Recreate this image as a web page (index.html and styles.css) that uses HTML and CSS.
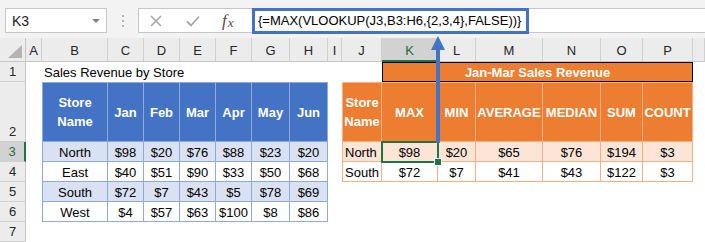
FILE: index.html
```html
<!DOCTYPE html>
<html>
<head>
<meta charset="utf-8">
<link rel="stylesheet" href="styles.css">
</head>
<body>
<div class="app">
  <div class="toolbar">
    <div class="namebox"><span>K3</span><span class="dd"></span></div>
    <div class="grip"><i></i><i></i><i></i></div>
    <div class="fbar">
      <div class="ficons">
        <svg class="ico-x" width="12" height="12" viewBox="0 0 12 12"><path d="M1 1L11 11M11 1L1 11" stroke="#a8a8a8" stroke-width="1.6" fill="none"/></svg>
        <svg class="ico-ok" width="14" height="12" viewBox="0 0 14 12"><path d="M1 6.5L5 10.5L13 1.5" stroke="#a8a8a8" stroke-width="1.8" fill="none"/></svg>
        <span class="fx">f<span class="fxx">x</span></span>
      </div>
      <div class="finput">{=MAX(VLOOKUP(J3,B3:H6,{2,3,4},FALSE))}</div>
    </div>
  </div>

  <div class="sheet">
    <div class="corner"><span class="tri"></span></div>
    <div class="ch">A</div>
    <div class="ch">B</div>
    <div class="ch">C</div>
    <div class="ch">D</div>
    <div class="ch">E</div>
    <div class="ch">F</div>
    <div class="ch">G</div>
    <div class="ch">H</div>
    <div class="ch">I</div>
    <div class="ch">J</div>
    <div class="ch sel">K</div>
    <div class="ch">L</div>
    <div class="ch">M</div>
    <div class="ch">N</div>
    <div class="ch">O</div>
    <div class="ch">P</div>
    <div class="ch"></div>

    <div class="rh r1">1</div>
    <div class="rh r2 bottom">2</div>
    <div class="rh r3 sel">3</div>
    <div class="rh r4">4</div>
    <div class="rh r5">5</div>
    <div class="rh r6">6</div>
    <div class="rh r7">7</div>

    <div class="title-left">Sales Revenue by Store</div>

    <div class="tbl blue">
      <div class="hd">Store<br>Name</div>
      <div class="hd">Jan</div>
      <div class="hd">Feb</div>
      <div class="hd">Mar</div>
      <div class="hd">Apr</div>
      <div class="hd">May</div>
      <div class="hd">Jun</div>

      <div class="c band">North</div><div class="c band">$98</div><div class="c band">$20</div><div class="c band">$76</div><div class="c band">$88</div><div class="c band">$23</div><div class="c band">$20</div>
      <div class="c">East</div><div class="c">$40</div><div class="c">$51</div><div class="c">$90</div><div class="c">$33</div><div class="c">$50</div><div class="c">$68</div>
      <div class="c band">South</div><div class="c band">$72</div><div class="c band">$7</div><div class="c band">$43</div><div class="c band">$5</div><div class="c band">$78</div><div class="c band">$69</div>
      <div class="c">West</div><div class="c">$4</div><div class="c">$57</div><div class="c">$63</div><div class="c">$100</div><div class="c">$8</div><div class="c">$86</div>
    </div>

    <div class="title-right">Jan-Mar Sales Revenue</div>

    <div class="tbl orange">
      <div class="hd">Store<br>Name</div>
      <div class="hd">MAX</div>
      <div class="hd">MIN</div>
      <div class="hd">AVERAGE</div>
      <div class="hd">MEDIAN</div>
      <div class="hd">SUM</div>
      <div class="hd">COUNT</div>

      <div class="c band left">North</div><div class="c band">$98</div><div class="c band">$20</div><div class="c band">$65</div><div class="c band">$76</div><div class="c band">$194</div><div class="c band">$3</div>
      <div class="c left">South</div><div class="c">$72</div><div class="c">$7</div><div class="c">$41</div><div class="c">$43</div><div class="c">$122</div><div class="c">$3</div>
    </div>
  </div>

  <div class="selection"></div>
  <div class="handle"></div>
  <svg class="arrow" width="16" height="112" viewBox="0 0 16 112">
    <path d="M6 13H10V109H6Z" fill="#4472c4"/>
    <path d="M1 16L8 2L15 16Z" fill="#4472c4"/>
  </svg>
</div>
</body>
</html>
```

FILE: styles.css
```css
html, body {
  margin: 0;
  padding: 0;
  background: #ffffff;
}

body {
  font-family: "Liberation Sans", Arial, sans-serif;
  color: #000;
}

.app {
  position: relative;
  width: 705px;
  height: 242px;
  overflow: hidden;
  background: #ffffff;
}

/* ---------- toolbar / formula bar ---------- */
.toolbar {
  display: flex;
  height: 38px;
  box-sizing: border-box;
  padding-top: 8px;
  background: #f3f3f3;
}

.namebox {
  margin-left: 5px;
  width: 102px;
  height: 25px;
  box-sizing: border-box;
  border: 1px solid #c6c6c6;
  background: #fff;
  display: flex;
  align-items: center;
  justify-content: space-between;
  padding: 0 6px 0 6px;
  font-size: 14px;
  color: #222;
}

.dd {
  width: 0;
  height: 0;
  border-left: 4px solid transparent;
  border-right: 4px solid transparent;
  border-top: 4px solid #808080;
}

.grip {
  width: 31px;
  height: 25px;
  display: flex;
  flex-direction: column;
  align-items: center;
  justify-content: center;
  gap: 3px;
}

.grip i {
  display: block;
  width: 2px;
  height: 2px;
  background: #b3b3b3;
}

.fbar {
  flex: 1;
  display: flex;
  height: 25px;
  box-sizing: border-box;
  background: #fff;
  border: 1px solid #c6c6c6;
  border-right: none;
}

.ficons {
  width: 113px;
  display: flex;
  align-items: center;
}

.ico-x {
  margin-left: 11px;
}

.ico-ok {
  margin-left: 24px;
}

.fx {
  margin-left: 22px;
  font-family: "Liberation Serif", "Times New Roman", serif;
  font-style: italic;
  font-size: 17px;
  color: #505050;
  line-height: 1;
}

.fxx {
  font-size: 13px;
  position: relative;
  top: 1px;
  margin-left: 1px;
}

.finput {
  width: 277px;
  height: 26px;
  margin-top: -1px;
  box-sizing: border-box;
  border: 3px solid #4472c4;
  padding-left: 3px;
  font-size: 13px;
  line-height: 20px;
  background: #fff;
  white-space: nowrap;
}

/* ---------- sheet grid ---------- */
.sheet {
  display: grid;
  grid-template-columns: 26px 16px 66px 36px 36px 36px 36px 38px 38px 14px 40px 56px 38px 67px 58px 42px 50px 1fr;
  grid-template-rows: 24px 20px 60px 20px 20px 20px 20px 20px;
  font-size: 13px;
}

.corner {
  grid-row: 1;
  grid-column: 1;
  background: #ececec;
  border-right: 1px solid #c6c6c6;
  border-bottom: 1px solid #c6c6c6;
  box-sizing: border-box;
  display: flex;
  align-items: flex-end;
  justify-content: flex-end;
  padding: 0 3px 3px 0;
}

.tri {
  width: 0;
  height: 0;
  border-left: 14px solid transparent;
  border-bottom: 13px solid #b4b4b4;
}

.ch {
  grid-row: 1;
  background: #ececec;
  border-right: 1px solid #d0d0d0;
  border-bottom: 1px solid #c6c6c6;
  box-sizing: border-box;
  display: flex;
  align-items: center;
  justify-content: center;
  color: #262626;
  padding-top: 2px;
}

.ch.sel {
  background: #d2d2d2;
  color: #1e6b40;
  border-bottom: 2px solid #217346;
}

.rh {
  grid-column: 1;
  background: #ececec;
  border-right: 1px solid #c6c6c6;
  border-bottom: 1px solid #d0d0d0;
  box-sizing: border-box;
  display: flex;
  align-items: center;
  justify-content: center;
  color: #262626;
}

.rh.bottom {
  align-items: flex-end;
  padding-bottom: 2px;
}

.rh.sel {
  background: #d2d2d2;
  color: #1e6b40;
  border-right: 2px solid #217346;
}

.r1 { grid-row: 2; }
.r2 { grid-row: 3; }
.r3 { grid-row: 4; }
.r4 { grid-row: 5; }
.r5 { grid-row: 6; }
.r6 { grid-row: 7; }
.r7 { grid-row: 8; }

.title-left {
  grid-row: 2;
  grid-column: 3 / 10;
  display: flex;
  align-items: center;
  padding-left: 2px;
  padding-top: 1px;
}

.title-right {
  grid-row: 2;
  grid-column: 12 / 18;
  background: #ed7d31;
  border: 1px solid #000;
  box-sizing: border-box;
  color: #fff;
  font-weight: bold;
  display: flex;
  align-items: center;
  justify-content: center;
}

/* ---------- tables ---------- */
.tbl {
  display: grid;
  box-sizing: border-box;
  border-left: 1px solid;
  border-top: 1px solid;
}

.tbl .hd,
.tbl .c {
  box-sizing: border-box;
  border-right: 1px solid;
  border-bottom: 1px solid;
  display: flex;
  align-items: center;
  justify-content: center;
  text-align: center;
  white-space: nowrap;
}

.tbl .hd {
  color: #fff;
  font-weight: bold;
  line-height: 19px;
}

.tbl .c {
  padding-top: 1px;
}

.tbl .c.left {
  justify-content: flex-start;
  padding-left: 2px;
}

.blue {
  grid-row: 3 / 8;
  grid-column: 3 / 10;
  grid-template-columns: 65px 36px 36px 36px 36px 38px 38px;
  grid-template-rows: 59px 20px 20px 20px 20px;
  border-color: #8ea9db;
}

.blue .hd {
  background: #4472c4;
  border-color: #8ea9db;
}

.blue .c {
  border-color: #8ea9db;
}

.blue .band {
  background: #d9e1f2;
}

.orange {
  grid-row: 3 / 6;
  grid-column: 11 / 18;
  grid-template-columns: 39px 56px 38px 67px 58px 42px 50px;
  grid-template-rows: 59px 20px 20px;
  border-color: #f4b084;
}

.orange .hd {
  background: #ed7d31;
  border-color: #f4b084;
}

.orange .c {
  border-color: #f4b084;
}

.orange .band {
  background: #fce4d6;
}

/* ---------- overlays ---------- */
.selection {
  position: absolute;
  left: 381px;
  top: 141px;
  width: 58px;
  height: 22px;
  box-sizing: border-box;
  border: 2px solid #217346;
}

.handle {
  position: absolute;
  left: 435px;
  top: 159px;
  width: 6px;
  height: 6px;
  background: #217346;
  box-shadow: 0 0 0 1px #fff;
}

.arrow {
  position: absolute;
  left: 430px;
  top: 34px;
}
```
